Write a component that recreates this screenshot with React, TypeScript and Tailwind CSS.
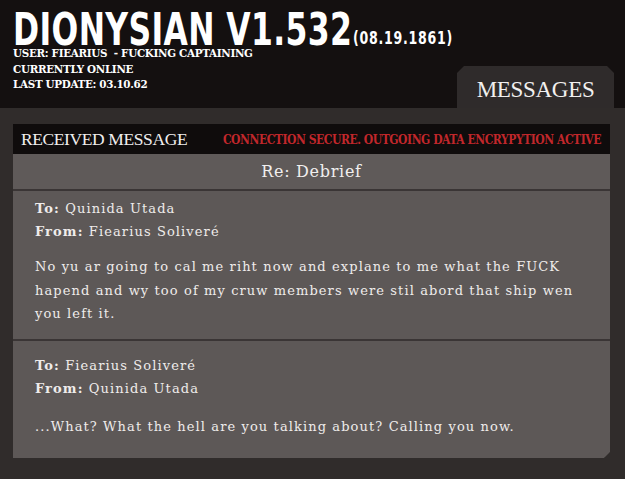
import React from 'react';

interface Message {
  to: string;
  from: string;
  lines: string[];
}

const messages: Message[] = [
  {
    to: 'Quinida Utada',
    from: 'Fiearius Soliveré',
    lines: [
      'No yu ar going to cal me riht now and explane to me what the FUCK',
      'hapend and wy too of my cruw members were stil abord that ship wen',
      'you left it.',
    ],
  },
  {
    to: 'Fiearius Soliveré',
    from: 'Quinida Utada',
    lines: ['...What? What the hell are you talking about? Calling you now.'],
  },
];

const slab = "font-['DejaVu_Serif',serif]";

export default function App() {
  return (
    <div className="w-[625px] h-[479px] overflow-hidden bg-[#2e2a29]">
      {/* Header */}
      <div className="h-[108px] bg-[#141010] flex justify-between">
        <div className="pl-[13px] pt-[13px] text-white shrink-0">
          <div className="flex items-end leading-none whitespace-nowrap">
            <div className="w-[340px] h-[33px]">
              <span className="inline-block origin-left scale-x-[0.715] font-['DejaVu_Sans',sans-serif] font-bold text-[44px] leading-[33px] tracking-[0.5px]">
                DIONYSIAN V1.532
              </span>
            </div>
            <div className="w-[104px] mb-[0px]">
              <span className="inline-block origin-left scale-x-[0.74] font-['DejaVu_Sans',sans-serif] font-bold text-[17px] leading-[15px] tracking-[1px]">
                (08.19.1861)
              </span>
            </div>
          </div>
          <div className="font-['DejaVu_Serif_Condensed','DejaVu_Serif',serif] font-stretch-condensed font-bold text-[11.5px] leading-[15.5px] tracking-[-0.3px] whitespace-nowrap">
            <div>USER: FIEARIUS&nbsp; - FUCKING CAPTAINING</div>
            <div>CURRENTLY ONLINE</div>
            <div>LAST UPDATE: 03.10.62</div>
          </div>
        </div>
        <div className="shrink-0 self-end mr-[14px] w-[157px] h-[42px] bg-[#2f2b2b] flex items-center justify-center [clip-path:polygon(7px_0,calc(100%-7px)_0,100%_7px,100%_100%,0_100%,0_7px)]">
          <span className="font-['Liberation_Serif',serif] text-[23px] text-[#f2f0ef] tracking-[-0.3px] pt-[6px]">
            MESSAGES
          </span>
        </div>
      </div>

      {/* Main */}
      <div className="bg-[#302c2b] pt-[16px] pl-[13px] pr-[15px]">
        <div className="w-[597px] bg-[#5d5857] shadow-[0_1px_3px_rgba(0,0,0,0.5)] [clip-path:polygon(0_0,100%_0,100%_calc(100%-6px),calc(100%-6px)_100%,0_100%)]">
          <div className="h-[30px] bg-[#0f0c0c] flex items-center pl-[8px] pr-[9px] whitespace-nowrap">
            <span className="font-['Liberation_Serif',serif] text-[17.5px] text-[#f0eeee] tracking-[-0.4px] pt-[1px]">
              RECEIVED MESSAGE
            </span>
            <span className="ml-auto font-['DejaVu_Serif_Condensed','DejaVu_Serif',serif] font-stretch-condensed font-bold text-[12px] text-[#c1272b] tracking-[-0.45px] pt-[1px]">
              CONNECTION SECURE. OUTGOING DATA ENCRYPYTION ACTIVE
            </span>
          </div>

          <div className={`h-[37px] flex items-center justify-center border-b-2 border-[#3a3535] bg-[#5f5a59] ${slab} text-[16px] text-[#f1efee] tracking-[0.7px]`}>
            Re: Debrief
          </div>

          {messages.map((m, i) => (
            <div
              key={i}
              className={`pl-[22px] pr-[10px] ${slab} text-[13px] text-[#efeceb] tracking-[1.1px] whitespace-nowrap ${
                i === 0 ? 'pt-[6px] pb-[13px] border-b-2 border-[#3a3535]' : 'pt-[13px] pb-[20px]'
              }`}
            >
              <div className="leading-[23px]">
                <span className="font-bold">To:</span> {m.to}
              </div>
              <div className="leading-[23px]">
                <span className="font-bold">From:</span> {m.from}
              </div>
              <div className={`leading-[23.5px] ${i === 0 ? 'mt-[12px]' : 'mt-[15px]'}`}>
                {m.lines.map((l, j) => (
                  <div key={j}>{l}</div>
                ))}
              </div>
            </div>
          ))}
        </div>
        <div className="h-[30px]" />
      </div>
    </div>
  );
}
